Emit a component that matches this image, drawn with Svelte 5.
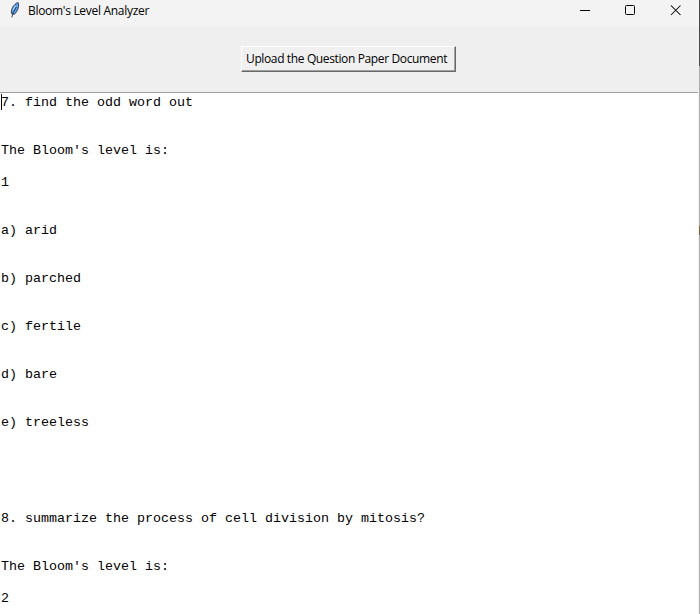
<script>
  const lines = [
    "7. find the odd word out", "", "",
    "The Bloom's level is:", "",
    "1", "", "",
    "a) arid", "", "",
    "b) parched", "", "",
    "c) fertile", "", "",
    "d) bare", "", "",
    "e) treeless", "", "", "", "", "",
    "8. summarize the process of cell division by mitosis?", "", "",
    "The Bloom's level is:", "",
    "2"
  ];
</script>

<div class="desktop">
  <div class="window">
    <header>
      <svg class="feather" width="12" height="18" viewBox="0 0 12 18">
        <path d="M9 1.4 C10.5 4.6 9.2 9.8 5.2 13.4 L2.6 12.6 C1.4 8.8 4.6 3.2 9 1.4Z" fill="#5b9ff0" stroke="#2a3038" stroke-width=".9" />
        <path d="M7.4 6 C5.4 9 3.8 11.5 2.8 16.5" fill="none" stroke="#18202a" stroke-width=".8" />
        <path d="M6.4 4.8 L4 9" stroke="#a6cdfa" stroke-width="1.1" />
      </svg>
      <span class="title">Bloom's Level Analyzer</span>
      <svg class="controls" width="104" height="20" viewBox="0 0 104 20" fill="none" stroke="#000">
        <path d="M1 10.5H11" />
        <rect x="46.5" y="5.5" width="9" height="9" rx="1" />
        <path d="M92 5.5L101.5 15M101.5 5.5L92 15" stroke-width="1.05" />
      </svg>
    </header>
    <div class="toolbar">
      <button><span>Upload the Question Paper Document</span></button>
    </div>
    <main>
      <i class="caret"></i>
      {#each lines as line}
        <div class="line">{line}</div>
      {/each}
    </main>
  </div>
  <div class="edge"><div class="dark"></div><div class="fleck"></div></div>
</div>

<style>
  :global(body) { overflow: hidden; }
  .desktop {
    display: flex;
    width: 700px;
    height: 614px;
    overflow: hidden;
    background: #fff;
    color: #000;
  }
  .window { width: 699px; display: flex; flex-direction: column; background: #f3f3f3; }
  header {
    height: 26px;
    flex: none;
    display: flex;
    align-items: flex-start;
    background: #f3f3f3;
    box-sizing: border-box;
    padding-left: 9px;
  }
  .feather { margin-top: 1px; }
  .title {
    margin-left: 7px;
    margin-top: 1px;
    font: 12px/20px "Open Sans", sans-serif;
    letter-spacing: -0.3px;
    white-space: nowrap;
  }
  .controls { margin-left: auto; margin-right: 16px; }
  .toolbar {
    height: 66px;
    flex: none;
    display: flex;
    background: #efefef;
  }
  button {
    margin: 20px 0 0 241px;
    width: 215px;
    height: 26px;
    box-sizing: border-box;
    padding: 0 0 0 4px;
    border: 1px solid;
    border-color: #fff #696969 #696969 #fff;
    box-shadow: inset -1px -1px #a0a0a0;
    background: #f0f0f0;
    color: #000;
    font: 12px/24px "Open Sans", sans-serif;
    letter-spacing: -0.37px;
    text-align: left;
    white-space: nowrap;
  }
  main {
    flex: 1;
    position: relative;
    margin-right: 1px;
    border-top: 1px solid #a0a0a0;
    padding: 2px 0 0 1px;
    background: #fff;
    overflow: hidden;
    font: 13.333px/16px "Liberation Mono", "Courier New", monospace;
  }
  .line { height: 16px; white-space: pre; }
  .caret {
    position: absolute;
    left: 1px;
    top: 1px;
    width: 1px;
    height: 16px;
    background: #000;
  }
  .edge { width: 1px; background: #acacac; }
  .dark { height: 66px; background: #4a4a4a; }
  .fleck { margin-top: 160px; height: 9px; background: #80602c; }
</style>
